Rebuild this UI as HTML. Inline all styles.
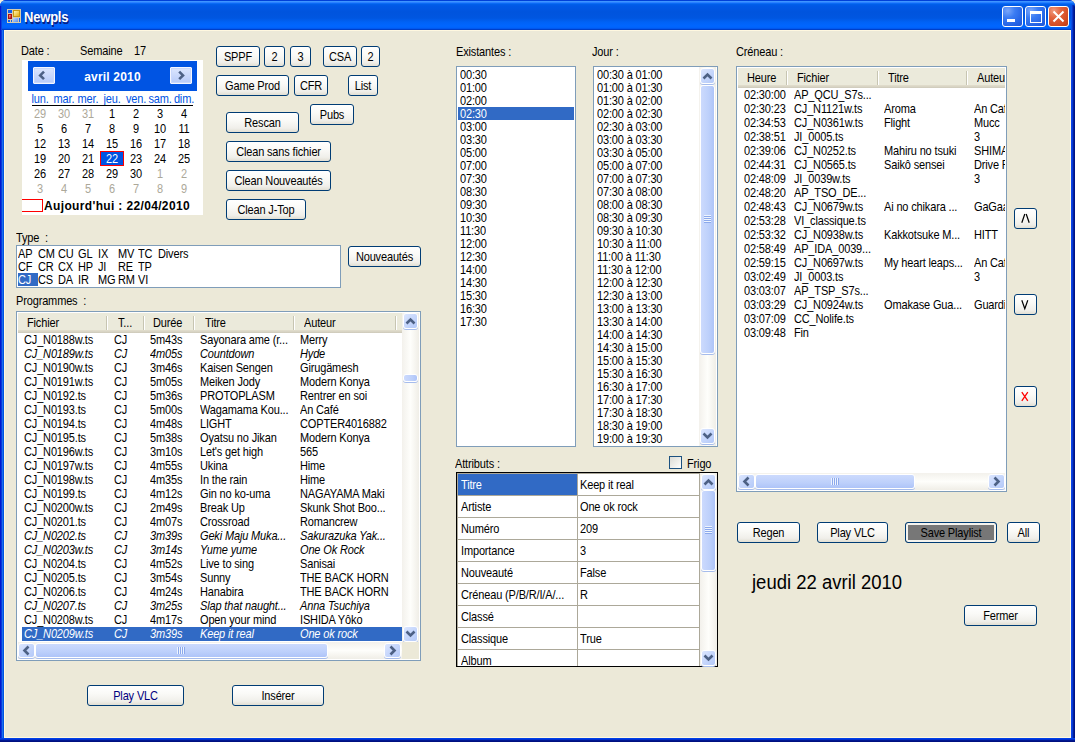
<!DOCTYPE html><html><head><meta charset="utf-8"><title>Newpls</title><style>
*{box-sizing:border-box;margin:0;padding:0}
html,body{width:1075px;height:742px;overflow:hidden;background:#F4F0DC}
body{position:relative;font-family:"Liberation Sans",sans-serif;font-size:11px;color:#000;letter-spacing:-0.15px}
.a{position:absolute}
.t{position:absolute;white-space:pre;line-height:13px;height:13px;margin-left:-1px;transform:scaleY(1.125);transform-origin:0 2px}
.tc{margin-left:0;text-align:center}
.frame{position:absolute;left:0;top:0;width:1075px;height:742px;border-radius:6px 6px 0 0;
 background:#0A3FD8}
.title{position:absolute;left:0;top:0;width:1075px;height:30px;border-radius:6px 6px 0 0;
 background:linear-gradient(to bottom,#0040D8 0px,#0040D8 1px,#3D95FF 1px,#3D95FF 2px,#2A80FF 2px,#2A80FF 3px,#0A6AF5 3px,#0A6AF5 4px,#0060EA 4px,#0058E6 6px,#0054DD 12px,#0056E0 18px,#0062F5 22px,#0066FF 26px,#0062F8 28px,#0058F0 28px,#0058F0 29px,#0040C8 29px,#0040C8 30px)}
.content{position:absolute;left:4px;top:30px;width:1067px;height:708px;background:#ECE9D8;border:1px solid #FFF8E0}
.lb{position:absolute;left:0;top:30px;width:4px;height:712px;background:linear-gradient(to right,#0019CF 0,#0019CF 1px,#0A3AD8 1px,#0A3AD8 2px,#1A6DF0 2px,#1A6DF0 3px,#0055E0 3px,#0055E0 4px)}
.rb{position:absolute;left:1071px;top:30px;width:4px;height:712px;background:linear-gradient(to right,#0A45E8 0,#0A45E8 1px,#0838D0 1px,#0838D0 2px,#00209F 2px,#00209F 3px,#001485 3px)}
.bb{position:absolute;left:0;top:738px;width:1075px;height:4px;background:linear-gradient(to bottom,#0040E8 0,#0040E8 1px,#0030D0 1px,#0030D0 2px,#001890 2px,#001890 3px,#001080 3px)}
.btn{position:absolute;border:1px solid #003C74;border-radius:3px;
 background:linear-gradient(to bottom,#FFFFFF 0%,#FAFAF7 40%,#F0EFEA 80%,#E2DFD3 100%);
 text-align:center;white-space:pre;line-height:19px;color:#000}
.btn span{display:inline-block;transform:scaleY(1.125);transform-origin:50% 5px}
.box{position:absolute;border:1px solid #7F9DB9;background:#fff}
.sel{background:#316AC5;color:#fff}
.sb{position:absolute;background:linear-gradient(to right,#F3F1EC,#FEFEFB 60%,#F3F1EC)}
.sarrow{position:absolute;border:1px solid #B5C9F5;border-radius:2px;background:linear-gradient(135deg,#DCE6FD,#B9CDF8)}
</style></head><body><div class="frame"></div><div class="title"></div><div class="lb"></div><div class="rb"></div><div class="bb"></div><div class="a" style="left:0;top:6px;width:2px;height:24px;background:linear-gradient(to right,#0019CF 0,#0019CF 1px,#0A44DC 1px)"></div><div class="a" style="left:1071px;top:5px;width:4px;height:25px;border-radius:0 2px 0 0;background:linear-gradient(to right,#0A50E8 0,#0A50E8 1px,#0838C8 1px,#0838C8 2px,#0020A0 2px,#0020A0 3px,#00158A 3px)"></div><div class="content"></div><div class="a" style="left:1002px;top:6px;width:21px;height:21px;border:1px solid #fff;border-radius:3px;background:radial-gradient(circle at 25% 20%,#7BA7FA 0%,#3B7CF3 35%,#2462E4 75%,#1F55D6 100%);overflow:hidden"><div class="a" style="left:4px;top:12px;width:8px;height:3px;background:#fff"></div></div><div class="a" style="left:1025px;top:6px;width:21px;height:21px;border:1px solid #fff;border-radius:3px;background:radial-gradient(circle at 25% 20%,#7BA7FA 0%,#3B7CF3 35%,#2462E4 75%,#1F55D6 100%);overflow:hidden"><div class="a" style="left:4px;top:4px;width:12px;height:12px;border:1px solid #fff;border-top-width:3px"></div></div><div class="a" style="left:1048px;top:6px;width:21px;height:21px;border:1px solid #fff;border-radius:3px;background:radial-gradient(circle at 25% 20%,#F09A7E 0%,#E2623C 35%,#D24A22 75%,#BD3A14 100%);overflow:hidden"><svg class="a" style="left:0;top:0" width="19" height="19"><path d="M4.5 4.5 L14.5 14.5 M14.5 4.5 L4.5 14.5" stroke="#fff" stroke-width="2" fill="none"/></svg></div><svg class="a" style="left:7px;top:9px" width="14" height="14"><defs><linearGradient id="gy" x1="0" y1="0" x2="1" y2="1"><stop offset="0" stop-color="#FFF6B0"/><stop offset="1" stop-color="#E8B010"/></linearGradient><linearGradient id="gr" x1="0" y1="0" x2="1" y2="1"><stop offset="0" stop-color="#FF9A9A"/><stop offset="1" stop-color="#B81010"/></linearGradient><linearGradient id="gb" x1="0" y1="0" x2="1" y2="1"><stop offset="0" stop-color="#C0D8FF"/><stop offset="1" stop-color="#5A8EE8"/></linearGradient></defs><rect x="0" y="0" width="14" height="14" fill="#D6CCAE"/><rect x="1" y="1" width="4" height="3" fill="#1060F0"/><rect x="1" y="5" width="4" height="5" fill="#A81010"/><rect x="2" y="6" width="2" height="3" fill="url(#gr)"/><rect x="6" y="1" width="7" height="7" fill="#C89810"/><rect x="7" y="2" width="5" height="5" fill="url(#gy)"/><rect x="6" y="9" width="5" height="4" fill="url(#gb)"/><rect x="1" y="11" width="2" height="2" fill="#1060F0"/><rect x="4" y="11" width="1" height="2" fill="#1060F0"/><rect x="12" y="9" width="1" height="4" fill="#1060F0"/></svg><div class="t" style="left:25px;top:8px;font-size:13px;font-weight:bold;color:#fff;height:18px;line-height:18px;text-shadow:1px 1px 0 #0A1E80;letter-spacing:-0.2px">Newpls</div><div class="t" style="left:22px;top:44px;">Date :</div><div class="t" style="left:81px;top:44px;">Semaine</div><div class="t" style="left:135px;top:44px;">17</div><div class="t" style="left:17px;top:231px;">Type  :</div><div class="t" style="left:17px;top:294px;">Programmes  :</div><div class="t" style="left:457px;top:45px;">Existantes :</div><div class="t" style="left:593px;top:45px;">Jour :</div><div class="t" style="left:737px;top:45px;">Créneau :</div><div class="t" style="left:456px;top:457px;">Attributs :</div><div class="t" style="left:688px;top:457px;">Frigo</div><div class="a" style="left:22px;top:60px;width:181px;height:155px;background:#fff;overflow:hidden"><div class="a" style="left:6px;top:1px;width:169px;height:30px;background:#0054E3"></div><div class="a" style="left:11px;top:7px;width:22px;height:17px;border:1px solid #F4F6FF;border-radius:1px;background:linear-gradient(to bottom,#DCE6FE,#B7CBF9);box-shadow:inset 0 0 0 1px #C9D8FC"><svg class="a" style="left:4px;top:2px" width="12" height="12"><path d="M6 1.6 L2.2 5.4 L6 9.2" stroke="#4D6185" stroke-width="2.6" fill="none"/></svg></div><div class="a" style="left:148px;top:7px;width:22px;height:17px;border:1px solid #F4F6FF;border-radius:1px;background:linear-gradient(to bottom,#DCE6FE,#B7CBF9);box-shadow:inset 0 0 0 1px #C9D8FC"><svg class="a" style="left:4px;top:2px" width="12" height="12"><path d="M4.2 1.6 L8 5.4 L4.2 9.2" stroke="#4D6185" stroke-width="2.6" fill="none"/></svg></div><div class="t tc" style="left:6px;top:10px;width:169px;font-weight:bold;color:#fff;font-size:12px;letter-spacing:0.2px">avril 2010</div><div class="t tc" style="left:4px;top:32px;width:28px;color:#0054E3">lun.</div><div class="t tc" style="left:28px;top:32px;width:28px;color:#0054E3">mar.</div><div class="t tc" style="left:52px;top:32px;width:28px;color:#0054E3">mer.</div><div class="t tc" style="left:76px;top:32px;width:28px;color:#0054E3">jeu.</div><div class="t tc" style="left:100px;top:32px;width:28px;color:#0054E3">ven.</div><div class="t tc" style="left:124px;top:32px;width:28px;color:#0054E3">sam.</div><div class="t tc" style="left:148px;top:32px;width:28px;color:#0054E3">dim.</div><div class="a" style="left:10px;top:45px;width:161px;height:1px;background:#000"></div><div class="t tc" style="left:6px;top:47px;width:24px;color:#ACA899">29</div><div class="t tc" style="left:30px;top:47px;width:24px;color:#ACA899">30</div><div class="t tc" style="left:54px;top:47px;width:24px;color:#ACA899">31</div><div class="t tc" style="left:78px;top:47px;width:24px;color:#000">1</div><div class="t tc" style="left:102px;top:47px;width:24px;color:#000">2</div><div class="t tc" style="left:126px;top:47px;width:24px;color:#000">3</div><div class="t tc" style="left:150px;top:47px;width:24px;color:#000">4</div><div class="t tc" style="left:6px;top:62px;width:24px;color:#000">5</div><div class="t tc" style="left:30px;top:62px;width:24px;color:#000">6</div><div class="t tc" style="left:54px;top:62px;width:24px;color:#000">7</div><div class="t tc" style="left:78px;top:62px;width:24px;color:#000">8</div><div class="t tc" style="left:102px;top:62px;width:24px;color:#000">9</div><div class="t tc" style="left:126px;top:62px;width:24px;color:#000">10</div><div class="t tc" style="left:150px;top:62px;width:24px;color:#000">11</div><div class="t tc" style="left:6px;top:77px;width:24px;color:#000">12</div><div class="t tc" style="left:30px;top:77px;width:24px;color:#000">13</div><div class="t tc" style="left:54px;top:77px;width:24px;color:#000">14</div><div class="t tc" style="left:78px;top:77px;width:24px;color:#000">15</div><div class="t tc" style="left:102px;top:77px;width:24px;color:#000">16</div><div class="t tc" style="left:126px;top:77px;width:24px;color:#000">17</div><div class="t tc" style="left:150px;top:77px;width:24px;color:#000">18</div><div class="t tc" style="left:6px;top:92px;width:24px;color:#000">19</div><div class="t tc" style="left:30px;top:92px;width:24px;color:#000">20</div><div class="t tc" style="left:54px;top:92px;width:24px;color:#000">21</div><div class="a" style="left:78px;top:91px;width:24px;height:15px;background:#0054E3;border:1px solid #FF0000"></div><div class="t tc" style="left:78px;top:92px;width:24px;color:#fff">22</div><div class="t tc" style="left:102px;top:92px;width:24px;color:#000">23</div><div class="t tc" style="left:126px;top:92px;width:24px;color:#000">24</div><div class="t tc" style="left:150px;top:92px;width:24px;color:#000">25</div><div class="t tc" style="left:6px;top:107px;width:24px;color:#000">26</div><div class="t tc" style="left:30px;top:107px;width:24px;color:#000">27</div><div class="t tc" style="left:54px;top:107px;width:24px;color:#000">28</div><div class="t tc" style="left:78px;top:107px;width:24px;color:#000">29</div><div class="t tc" style="left:102px;top:107px;width:24px;color:#000">30</div><div class="t tc" style="left:126px;top:107px;width:24px;color:#ACA899">1</div><div class="t tc" style="left:150px;top:107px;width:24px;color:#ACA899">2</div><div class="t tc" style="left:6px;top:122px;width:24px;color:#ACA899">3</div><div class="t tc" style="left:30px;top:122px;width:24px;color:#ACA899">4</div><div class="t tc" style="left:54px;top:122px;width:24px;color:#ACA899">5</div><div class="t tc" style="left:78px;top:122px;width:24px;color:#ACA899">6</div><div class="t tc" style="left:102px;top:122px;width:24px;color:#ACA899">7</div><div class="t tc" style="left:126px;top:122px;width:24px;color:#ACA899">8</div><div class="t tc" style="left:150px;top:122px;width:24px;color:#ACA899">9</div><div class="a" style="left:-10px;top:139px;width:31px;height:13px;border:1px solid #FF0000"></div><div class="t" style="left:23px;top:139px;font-weight:bold;font-size:12px;letter-spacing:0.35px">Aujourd&#39;hui : 22/04/2010</div></div><div class="box" style="left:16px;top:245px;width:325px;height:43px"></div><div class="a sel" style="left:18px;top:273px;width:20px;height:13px"></div><div class="t" style="left:19px;top:247px;color:#000">AP</div><div class="t" style="left:19px;top:260px;color:#000">CF</div><div class="t" style="left:19px;top:273px;color:#fff">CJ</div><div class="t" style="left:39px;top:247px;color:#000">CM</div><div class="t" style="left:39px;top:260px;color:#000">CR</div><div class="t" style="left:39px;top:273px;color:#000">CS</div><div class="t" style="left:59px;top:247px;color:#000">CU</div><div class="t" style="left:59px;top:260px;color:#000">CX</div><div class="t" style="left:59px;top:273px;color:#000">DA</div><div class="t" style="left:79px;top:247px;color:#000">GL</div><div class="t" style="left:79px;top:260px;color:#000">HP</div><div class="t" style="left:79px;top:273px;color:#000">IR</div><div class="t" style="left:99px;top:247px;color:#000">IX</div><div class="t" style="left:99px;top:260px;color:#000">JI</div><div class="t" style="left:99px;top:273px;color:#000">MG</div><div class="t" style="left:119px;top:247px;color:#000">MV</div><div class="t" style="left:119px;top:260px;color:#000">RE</div><div class="t" style="left:119px;top:273px;color:#000">RM</div><div class="t" style="left:139px;top:247px;color:#000">TC</div><div class="t" style="left:139px;top:260px;color:#000">TP</div><div class="t" style="left:139px;top:273px;color:#000">VI</div><div class="t" style="left:159px;top:247px;color:#000">Divers</div><div class="box" style="left:16px;top:311px;width:405px;height:350px;box-shadow:inset 0 0 0 1px #fff"></div><div class="a" style="left:18px;top:313px;width:384px;height:20px;background:linear-gradient(to bottom,#EBEADB 0,#EBEADB 17px,#E2DECD 17px,#D6D2C2 19px,#CBC7B8 20px)"></div><div class="a" style="left:106px;top:316px;width:1px;height:14px;background:#C7C5B2"></div><div class="a" style="left:107px;top:316px;width:1px;height:14px;background:#fff"></div><div class="a" style="left:143px;top:316px;width:1px;height:14px;background:#C7C5B2"></div><div class="a" style="left:144px;top:316px;width:1px;height:14px;background:#fff"></div><div class="a" style="left:193px;top:316px;width:1px;height:14px;background:#C7C5B2"></div><div class="a" style="left:194px;top:316px;width:1px;height:14px;background:#fff"></div><div class="a" style="left:293px;top:316px;width:1px;height:14px;background:#C7C5B2"></div><div class="a" style="left:294px;top:316px;width:1px;height:14px;background:#fff"></div><div class="a" style="left:395px;top:316px;width:1px;height:14px;background:#C7C5B2"></div><div class="a" style="left:396px;top:316px;width:1px;height:14px;background:#fff"></div><div class="t" style="left:28px;top:316px">Fichier</div><div class="t" style="left:119px;top:316px">T...</div><div class="t" style="left:154px;top:316px">Durée</div><div class="t" style="left:206px;top:316px">Titre</div><div class="t" style="left:305px;top:316px">Auteur</div><div class="a" style="left:18px;top:333px;width:384px;height:309px;overflow:hidden"><div class="t" style="left:7px;top:0px;">CJ_N0188w.ts</div><div class="t" style="left:97px;top:0px;">CJ</div><div class="t" style="left:133px;top:0px;">5m43s</div><div class="t" style="left:183px;top:0px;">Sayonara ame (r...</div><div class="t" style="left:283px;top:0px;">Merry</div><div class="t" style="left:7px;top:14px;font-style:italic;">CJ_N0189w.ts</div><div class="t" style="left:97px;top:14px;font-style:italic;">CJ</div><div class="t" style="left:133px;top:14px;font-style:italic;">4m05s</div><div class="t" style="left:183px;top:14px;font-style:italic;">Countdown</div><div class="t" style="left:283px;top:14px;font-style:italic;">Hyde</div><div class="t" style="left:7px;top:28px;">CJ_N0190w.ts</div><div class="t" style="left:97px;top:28px;">CJ</div><div class="t" style="left:133px;top:28px;">3m46s</div><div class="t" style="left:183px;top:28px;">Kaisen Sengen</div><div class="t" style="left:283px;top:28px;">Girugämesh</div><div class="t" style="left:7px;top:42px;">CJ_N0191w.ts</div><div class="t" style="left:97px;top:42px;">CJ</div><div class="t" style="left:133px;top:42px;">5m05s</div><div class="t" style="left:183px;top:42px;">Meiken Jody</div><div class="t" style="left:283px;top:42px;">Modern Konya</div><div class="t" style="left:7px;top:56px;">CJ_N0192.ts</div><div class="t" style="left:97px;top:56px;">CJ</div><div class="t" style="left:133px;top:56px;">5m36s</div><div class="t" style="left:183px;top:56px;">PROTOPLASM</div><div class="t" style="left:283px;top:56px;">Rentrer en soi</div><div class="t" style="left:7px;top:70px;">CJ_N0193.ts</div><div class="t" style="left:97px;top:70px;">CJ</div><div class="t" style="left:133px;top:70px;">5m00s</div><div class="t" style="left:183px;top:70px;">Wagamama Kou...</div><div class="t" style="left:283px;top:70px;">An Café</div><div class="t" style="left:7px;top:84px;">CJ_N0194.ts</div><div class="t" style="left:97px;top:84px;">CJ</div><div class="t" style="left:133px;top:84px;">4m48s</div><div class="t" style="left:183px;top:84px;">LIGHT</div><div class="t" style="left:283px;top:84px;">COPTER4016882</div><div class="t" style="left:7px;top:98px;">CJ_N0195.ts</div><div class="t" style="left:97px;top:98px;">CJ</div><div class="t" style="left:133px;top:98px;">5m38s</div><div class="t" style="left:183px;top:98px;">Oyatsu no Jikan</div><div class="t" style="left:283px;top:98px;">Modern Konya</div><div class="t" style="left:7px;top:112px;">CJ_N0196w.ts</div><div class="t" style="left:97px;top:112px;">CJ</div><div class="t" style="left:133px;top:112px;">3m10s</div><div class="t" style="left:183px;top:112px;">Let&#x27;s get high</div><div class="t" style="left:283px;top:112px;">565</div><div class="t" style="left:7px;top:126px;">CJ_N0197w.ts</div><div class="t" style="left:97px;top:126px;">CJ</div><div class="t" style="left:133px;top:126px;">4m55s</div><div class="t" style="left:183px;top:126px;">Ukina</div><div class="t" style="left:283px;top:126px;">Hime</div><div class="t" style="left:7px;top:140px;">CJ_N0198w.ts</div><div class="t" style="left:97px;top:140px;">CJ</div><div class="t" style="left:133px;top:140px;">4m35s</div><div class="t" style="left:183px;top:140px;">In the rain</div><div class="t" style="left:283px;top:140px;">Hime</div><div class="t" style="left:7px;top:154px;">CJ_N0199.ts</div><div class="t" style="left:97px;top:154px;">CJ</div><div class="t" style="left:133px;top:154px;">4m12s</div><div class="t" style="left:183px;top:154px;">Gin no ko-uma</div><div class="t" style="left:283px;top:154px;">NAGAYAMA Maki</div><div class="t" style="left:7px;top:168px;">CJ_N0200w.ts</div><div class="t" style="left:97px;top:168px;">CJ</div><div class="t" style="left:133px;top:168px;">2m49s</div><div class="t" style="left:183px;top:168px;">Break Up</div><div class="t" style="left:283px;top:168px;">Skunk Shot Boo...</div><div class="t" style="left:7px;top:182px;">CJ_N0201.ts</div><div class="t" style="left:97px;top:182px;">CJ</div><div class="t" style="left:133px;top:182px;">4m07s</div><div class="t" style="left:183px;top:182px;">Crossroad</div><div class="t" style="left:283px;top:182px;">Romancrew</div><div class="t" style="left:7px;top:196px;font-style:italic;">CJ_N0202.ts</div><div class="t" style="left:97px;top:196px;font-style:italic;">CJ</div><div class="t" style="left:133px;top:196px;font-style:italic;">3m39s</div><div class="t" style="left:183px;top:196px;font-style:italic;">Geki Maju Muka...</div><div class="t" style="left:283px;top:196px;font-style:italic;">Sakurazuka Yak...</div><div class="t" style="left:7px;top:210px;font-style:italic;">CJ_N0203w.ts</div><div class="t" style="left:97px;top:210px;font-style:italic;">CJ</div><div class="t" style="left:133px;top:210px;font-style:italic;">3m14s</div><div class="t" style="left:183px;top:210px;font-style:italic;">Yume yume</div><div class="t" style="left:283px;top:210px;font-style:italic;">One Ok Rock</div><div class="t" style="left:7px;top:224px;">CJ_N0204.ts</div><div class="t" style="left:97px;top:224px;">CJ</div><div class="t" style="left:133px;top:224px;">4m52s</div><div class="t" style="left:183px;top:224px;">Live to sing</div><div class="t" style="left:283px;top:224px;">Sanisai</div><div class="t" style="left:7px;top:238px;">CJ_N0205.ts</div><div class="t" style="left:97px;top:238px;">CJ</div><div class="t" style="left:133px;top:238px;">3m54s</div><div class="t" style="left:183px;top:238px;">Sunny</div><div class="t" style="left:283px;top:238px;">THE BACK HORN</div><div class="t" style="left:7px;top:252px;">CJ_N0206.ts</div><div class="t" style="left:97px;top:252px;">CJ</div><div class="t" style="left:133px;top:252px;">4m24s</div><div class="t" style="left:183px;top:252px;">Hanabira</div><div class="t" style="left:283px;top:252px;">THE BACK HORN</div><div class="t" style="left:7px;top:266px;font-style:italic;">CJ_N0207.ts</div><div class="t" style="left:97px;top:266px;font-style:italic;">CJ</div><div class="t" style="left:133px;top:266px;font-style:italic;">3m25s</div><div class="t" style="left:183px;top:266px;font-style:italic;">Slap that naught...</div><div class="t" style="left:283px;top:266px;font-style:italic;">Anna Tsuchiya</div><div class="t" style="left:7px;top:280px;">CJ_N0208w.ts</div><div class="t" style="left:97px;top:280px;">CJ</div><div class="t" style="left:133px;top:280px;">4m17s</div><div class="t" style="left:183px;top:280px;">Open your mind</div><div class="t" style="left:283px;top:280px;">ISHIDA Yôko</div><div class="a sel" style="left:4px;top:294px;width:380px;height:14px"></div><div class="t" style="left:7px;top:294px;font-style:italic;color:#fff;">CJ_N0209w.ts</div><div class="t" style="left:97px;top:294px;font-style:italic;color:#fff;">CJ</div><div class="t" style="left:133px;top:294px;font-style:italic;color:#fff;">3m39s</div><div class="t" style="left:183px;top:294px;font-style:italic;color:#fff;">Keep it real</div><div class="t" style="left:283px;top:294px;font-style:italic;color:#fff;">One ok rock</div></div><div class="a" style="left:402px;top:313px;width:17px;height:329px;background:linear-gradient(to right,#F3F1EC,#FEFEFB 50%,#F0EEE7)"></div><div class="a" style="left:403px;top:313px;width:15px;height:16px;border-radius:3px;border:1px solid #fff;background:linear-gradient(135deg,#DCE6FE 0%,#C8D8FC 45%,#B4C9F8 100%);box-shadow:0 1px 0 #A6BCEC"></div><svg class="a" style="left:402px;top:312px" width="17" height="17"><path d="M4.5 11.5 L8.5 7.5 L12.5 11.5" stroke="#4D6185" stroke-width="2.6" fill="none" stroke-linecap="butt"/></svg><div class="a" style="left:403px;top:374px;width:15px;height:8px;border-radius:3px;border:1px solid #fff;background:linear-gradient(to right,#CCDAFD,#BDD0FB 60%,#AEC4F8);box-shadow:0 1px 0 #A6BCEC"></div><div class="a" style="left:403px;top:626px;width:15px;height:16px;border-radius:3px;border:1px solid #fff;background:linear-gradient(135deg,#DCE6FE 0%,#C8D8FC 45%,#B4C9F8 100%);box-shadow:0 1px 0 #A6BCEC"></div><svg class="a" style="left:402px;top:625px" width="17" height="17"><path d="M4.5 6.5 L8.5 10.5 L12.5 6.5" stroke="#4D6185" stroke-width="2.6" fill="none" stroke-linecap="butt"/></svg><div class="a" style="left:18px;top:642px;width:384px;height:17px;background:linear-gradient(to bottom,#F3F1EC,#FEFEFB 50%,#F0EEE7)"></div><div class="a" style="left:18px;top:643px;width:17px;height:15px;border-radius:3px;border:1px solid #fff;background:linear-gradient(135deg,#DCE6FE 0%,#C8D8FC 45%,#B4C9F8 100%);box-shadow:0 1px 0 #A6BCEC"></div><svg class="a" style="left:18px;top:642px" width="17" height="17"><path d="M10.5 4.5 L6.5 8.5 L10.5 12.5" stroke="#4D6185" stroke-width="2.6" fill="none" stroke-linecap="butt"/></svg><div class="a" style="left:35px;top:643px;width:293px;height:15px;border-radius:3px;border:1px solid #fff;background:linear-gradient(to bottom,#CCDAFD,#BDD0FB 60%,#AEC4F8);box-shadow:0 1px 0 #A6BCEC"></div><div class="a" style="left:177px;top:647px;width:8px;height:7px;background:repeating-linear-gradient(to right,#EEF4FE 0,#EEF4FE 1px,#8CA9EC 1px,#8CA9EC 2px)"></div><div class="a" style="left:384px;top:643px;width:17px;height:15px;border-radius:3px;border:1px solid #fff;background:linear-gradient(135deg,#DCE6FE 0%,#C8D8FC 45%,#B4C9F8 100%);box-shadow:0 1px 0 #A6BCEC"></div><svg class="a" style="left:384px;top:642px" width="17" height="17"><path d="M6.5 4.5 L10.5 8.5 L6.5 12.5" stroke="#4D6185" stroke-width="2.6" fill="none" stroke-linecap="butt"/></svg><div class="a" style="left:402px;top:642px;width:17px;height:17px;background:#ECE9D8"></div><div class="box" style="left:456px;top:66px;width:120px;height:381px"></div><div class="a sel" style="left:458px;top:107px;width:116px;height:13px"></div><div class="t" style="left:461px;top:68px;color:#000">00:30</div><div class="t" style="left:461px;top:81px;color:#000">01:00</div><div class="t" style="left:461px;top:94px;color:#000">02:00</div><div class="t" style="left:461px;top:107px;color:#fff">02:30</div><div class="t" style="left:461px;top:120px;color:#000">03:00</div><div class="t" style="left:461px;top:133px;color:#000">03:30</div><div class="t" style="left:461px;top:146px;color:#000">05:00</div><div class="t" style="left:461px;top:159px;color:#000">07:00</div><div class="t" style="left:461px;top:172px;color:#000">07:30</div><div class="t" style="left:461px;top:185px;color:#000">08:30</div><div class="t" style="left:461px;top:198px;color:#000">09:30</div><div class="t" style="left:461px;top:211px;color:#000">10:30</div><div class="t" style="left:461px;top:224px;color:#000">11:30</div><div class="t" style="left:461px;top:237px;color:#000">12:00</div><div class="t" style="left:461px;top:250px;color:#000">12:30</div><div class="t" style="left:461px;top:263px;color:#000">14:00</div><div class="t" style="left:461px;top:276px;color:#000">14:30</div><div class="t" style="left:461px;top:289px;color:#000">15:30</div><div class="t" style="left:461px;top:302px;color:#000">16:30</div><div class="t" style="left:461px;top:315px;color:#000">17:30</div><div class="box" style="left:593px;top:66px;width:125px;height:381px"></div><div class="t" style="left:598px;top:68px">00:30 à 01:00</div><div class="t" style="left:598px;top:81px">01:00 à 01:30</div><div class="t" style="left:598px;top:94px">01:30 à 02:00</div><div class="t" style="left:598px;top:107px">02:00 à 02:30</div><div class="t" style="left:598px;top:120px">02:30 à 03:00</div><div class="t" style="left:598px;top:133px">03:00 à 03:30</div><div class="t" style="left:598px;top:146px">03:30 à 05:00</div><div class="t" style="left:598px;top:159px">05:00 à 07:00</div><div class="t" style="left:598px;top:172px">07:00 à 07:30</div><div class="t" style="left:598px;top:185px">07:30 à 08:00</div><div class="t" style="left:598px;top:198px">08:00 à 08:30</div><div class="t" style="left:598px;top:211px">08:30 à 09:30</div><div class="t" style="left:598px;top:224px">09:30 à 10:30</div><div class="t" style="left:598px;top:237px">10:30 à 11:00</div><div class="t" style="left:598px;top:250px">11:00 à 11:30</div><div class="t" style="left:598px;top:263px">11:30 à 12:00</div><div class="t" style="left:598px;top:276px">12:00 à 12:30</div><div class="t" style="left:598px;top:289px">12:30 à 13:00</div><div class="t" style="left:598px;top:302px">13:00 à 13:30</div><div class="t" style="left:598px;top:315px">13:30 à 14:00</div><div class="t" style="left:598px;top:328px">14:00 à 14:30</div><div class="t" style="left:598px;top:341px">14:30 à 15:00</div><div class="t" style="left:598px;top:354px">15:00 à 15:30</div><div class="t" style="left:598px;top:367px">15:30 à 16:30</div><div class="t" style="left:598px;top:380px">16:30 à 17:00</div><div class="t" style="left:598px;top:393px">17:00 à 17:30</div><div class="t" style="left:598px;top:406px">17:30 à 18:30</div><div class="t" style="left:598px;top:419px">18:30 à 19:00</div><div class="t" style="left:598px;top:432px">19:00 à 19:30</div><div class="a" style="left:699px;top:67px;width:17px;height:379px;background:linear-gradient(to right,#F3F1EC,#FEFEFB 50%,#F0EEE7)"></div><div class="a" style="left:700px;top:68px;width:15px;height:16px;border-radius:3px;border:1px solid #fff;background:linear-gradient(135deg,#DCE6FE 0%,#C8D8FC 45%,#B4C9F8 100%);box-shadow:0 1px 0 #A6BCEC"></div><svg class="a" style="left:699px;top:67px" width="17" height="17"><path d="M4.5 11.5 L8.5 7.5 L12.5 11.5" stroke="#4D6185" stroke-width="2.6" fill="none" stroke-linecap="butt"/></svg><div class="a" style="left:700px;top:85px;width:15px;height:269px;border-radius:3px;border:1px solid #fff;background:linear-gradient(to right,#CCDAFD,#BDD0FB 60%,#AEC4F8);box-shadow:0 1px 0 #A6BCEC"></div><div class="a" style="left:704px;top:215px;width:7px;height:8px;background:repeating-linear-gradient(to bottom,#EEF4FE 0,#EEF4FE 1px,#8CA9EC 1px,#8CA9EC 2px)"></div><div class="a" style="left:700px;top:428px;width:15px;height:16px;border-radius:3px;border:1px solid #fff;background:linear-gradient(135deg,#DCE6FE 0%,#C8D8FC 45%,#B4C9F8 100%);box-shadow:0 1px 0 #A6BCEC"></div><svg class="a" style="left:699px;top:427px" width="17" height="17"><path d="M4.5 6.5 L8.5 10.5 L12.5 6.5" stroke="#4D6185" stroke-width="2.6" fill="none" stroke-linecap="butt"/></svg><div class="a" style="left:669px;top:456px;width:13px;height:13px;border:1px solid #1C5180;background:linear-gradient(135deg,#DCDBD5,#F4F4F0 70%,#FFFFFF)"></div><div class="a" style="left:456px;top:472px;width:262px;height:195px;border:1px solid #000;background:#fff;overflow:hidden"><div class="a" style="left:0;top:0;width:243px;height:1px;background:#ACA899"></div><div class="a" style="left:0;top:0;width:1px;height:193px;background:#ACA899"></div><div class="a" style="left:120px;top:0;width:1px;height:193px;background:#ACA899"></div><div class="a" style="left:242px;top:0;width:1px;height:193px;background:#ACA899"></div><div class="a" style="left:0;top:22px;width:243px;height:1px;background:#ACA899"></div><div class="a" style="left:0;top:44px;width:243px;height:1px;background:#ACA899"></div><div class="a" style="left:0;top:66px;width:243px;height:1px;background:#ACA899"></div><div class="a" style="left:0;top:88px;width:243px;height:1px;background:#ACA899"></div><div class="a" style="left:0;top:110px;width:243px;height:1px;background:#ACA899"></div><div class="a" style="left:0;top:132px;width:243px;height:1px;background:#ACA899"></div><div class="a" style="left:0;top:154px;width:243px;height:1px;background:#ACA899"></div><div class="a" style="left:0;top:176px;width:243px;height:1px;background:#ACA899"></div><div class="a" style="left:0;top:198px;width:243px;height:1px;background:#ACA899"></div><div class="a sel" style="left:1px;top:1px;width:119px;height:21px"></div><div class="t" style="left:5px;top:5px;color:#fff">Titre</div><div class="t" style="left:124px;top:5px">Keep it real</div><div class="t" style="left:5px;top:27px;color:#000">Artiste</div><div class="t" style="left:124px;top:27px">One ok rock</div><div class="t" style="left:5px;top:49px;color:#000">Numéro</div><div class="t" style="left:124px;top:49px">209</div><div class="t" style="left:5px;top:71px;color:#000">Importance</div><div class="t" style="left:124px;top:71px">3</div><div class="t" style="left:5px;top:93px;color:#000">Nouveauté</div><div class="t" style="left:124px;top:93px">False</div><div class="t" style="left:5px;top:115px;color:#000">Créneau (P/B/R/I/A/...</div><div class="t" style="left:124px;top:115px">R</div><div class="t" style="left:5px;top:137px;color:#000">Classé</div><div class="t" style="left:124px;top:137px"></div><div class="t" style="left:5px;top:159px;color:#000">Classique</div><div class="t" style="left:124px;top:159px">True</div><div class="t" style="left:5px;top:181px;color:#000">Album</div><div class="t" style="left:124px;top:181px"></div></div><div class="a" style="left:700px;top:473px;width:17px;height:193px;background:linear-gradient(to right,#F3F1EC,#FEFEFB 50%,#F0EEE7)"></div><div class="a" style="left:701px;top:474px;width:15px;height:16px;border-radius:3px;border:1px solid #fff;background:linear-gradient(135deg,#DCE6FE 0%,#C8D8FC 45%,#B4C9F8 100%);box-shadow:0 1px 0 #A6BCEC"></div><svg class="a" style="left:700px;top:473px" width="17" height="17"><path d="M4.5 11.5 L8.5 7.5 L12.5 11.5" stroke="#4D6185" stroke-width="2.6" fill="none" stroke-linecap="butt"/></svg><div class="a" style="left:701px;top:490px;width:15px;height:81px;border-radius:3px;border:1px solid #fff;background:linear-gradient(to right,#CCDAFD,#BDD0FB 60%,#AEC4F8);box-shadow:0 1px 0 #A6BCEC"></div><div class="a" style="left:705px;top:526px;width:7px;height:8px;background:repeating-linear-gradient(to bottom,#EEF4FE 0,#EEF4FE 1px,#8CA9EC 1px,#8CA9EC 2px)"></div><div class="a" style="left:701px;top:650px;width:15px;height:16px;border-radius:3px;border:1px solid #fff;background:linear-gradient(135deg,#DCE6FE 0%,#C8D8FC 45%,#B4C9F8 100%);box-shadow:0 1px 0 #A6BCEC"></div><svg class="a" style="left:700px;top:649px" width="17" height="17"><path d="M4.5 6.5 L8.5 10.5 L12.5 6.5" stroke="#4D6185" stroke-width="2.6" fill="none" stroke-linecap="butt"/></svg><div class="box" style="left:736px;top:66px;width:271px;height:426px;box-shadow:inset 0 0 0 1px #fff"></div><div class="a" style="left:738px;top:68px;width:267px;height:20px;background:linear-gradient(to bottom,#EBEADB 0,#EBEADB 17px,#E2DECD 17px,#D6D2C2 19px,#CBC7B8 20px)"></div><div class="a" style="left:786px;top:71px;width:1px;height:14px;background:#C7C5B2"></div><div class="a" style="left:787px;top:71px;width:1px;height:14px;background:#fff"></div><div class="a" style="left:877px;top:71px;width:1px;height:14px;background:#C7C5B2"></div><div class="a" style="left:878px;top:71px;width:1px;height:14px;background:#fff"></div><div class="a" style="left:966px;top:71px;width:1px;height:14px;background:#C7C5B2"></div><div class="a" style="left:967px;top:71px;width:1px;height:14px;background:#fff"></div><div class="a" style="left:738px;top:68px;width:267px;height:20px;overflow:hidden"><div class="t" style="left:10px;top:3px">Heure</div><div class="t" style="left:60px;top:3px">Fichier</div><div class="t" style="left:151px;top:3px">Titre</div><div class="t" style="left:240px;top:3px">Auteur</div></div><div class="a" style="left:738px;top:88px;width:267px;height:385px;overflow:hidden"><div class="t" style="left:7px;top:0px">02:30:00</div><div class="t" style="left:57px;top:0px">AP_QCU_S7s...</div><div class="t" style="left:7px;top:14px">02:30:23</div><div class="t" style="left:57px;top:14px">CJ_N1121w.ts</div><div class="t" style="left:147px;top:14px">Aroma</div><div class="t" style="left:237px;top:14px">An Café</div><div class="t" style="left:7px;top:28px">02:34:53</div><div class="t" style="left:57px;top:28px">CJ_N0361w.ts</div><div class="t" style="left:147px;top:28px">Flight</div><div class="t" style="left:237px;top:28px">Mucc</div><div class="t" style="left:7px;top:42px">02:38:51</div><div class="t" style="left:57px;top:42px">JI_0005.ts</div><div class="t" style="left:237px;top:42px">3</div><div class="t" style="left:7px;top:56px">02:39:06</div><div class="t" style="left:57px;top:56px">CJ_N0252.ts</div><div class="t" style="left:147px;top:56px">Mahiru no tsuki</div><div class="t" style="left:237px;top:56px">SHIMA</div><div class="t" style="left:7px;top:70px">02:44:31</div><div class="t" style="left:57px;top:70px">CJ_N0565.ts</div><div class="t" style="left:147px;top:70px">Saikô sensei</div><div class="t" style="left:237px;top:70px">Drive F</div><div class="t" style="left:7px;top:84px">02:48:09</div><div class="t" style="left:57px;top:84px">JI_0039w.ts</div><div class="t" style="left:237px;top:84px">3</div><div class="t" style="left:7px;top:98px">02:48:20</div><div class="t" style="left:57px;top:98px">AP_TSO_DE...</div><div class="t" style="left:7px;top:112px">02:48:43</div><div class="t" style="left:57px;top:112px">CJ_N0679w.ts</div><div class="t" style="left:147px;top:112px">Ai no chikara ...</div><div class="t" style="left:237px;top:112px">GaGaa</div><div class="t" style="left:7px;top:126px">02:53:28</div><div class="t" style="left:57px;top:126px">VI_classique.ts</div><div class="t" style="left:7px;top:140px">02:53:32</div><div class="t" style="left:57px;top:140px">CJ_N0938w.ts</div><div class="t" style="left:147px;top:140px">Kakkotsuke M...</div><div class="t" style="left:237px;top:140px">HITT</div><div class="t" style="left:7px;top:154px">02:58:49</div><div class="t" style="left:57px;top:154px">AP_IDA_0039...</div><div class="t" style="left:7px;top:168px">02:59:15</div><div class="t" style="left:57px;top:168px">CJ_N0697w.ts</div><div class="t" style="left:147px;top:168px">My heart leaps...</div><div class="t" style="left:237px;top:168px">An Café</div><div class="t" style="left:7px;top:182px">03:02:49</div><div class="t" style="left:57px;top:182px">JI_0003.ts</div><div class="t" style="left:237px;top:182px">3</div><div class="t" style="left:7px;top:196px">03:03:07</div><div class="t" style="left:57px;top:196px">AP_TSP_S7s...</div><div class="t" style="left:7px;top:210px">03:03:29</div><div class="t" style="left:57px;top:210px">CJ_N0924w.ts</div><div class="t" style="left:147px;top:210px">Omakase Gua...</div><div class="t" style="left:237px;top:210px">Guardian</div><div class="t" style="left:7px;top:224px">03:07:09</div><div class="t" style="left:57px;top:224px">CC_Nolife.ts</div><div class="t" style="left:7px;top:238px">03:09:48</div><div class="t" style="left:57px;top:238px">Fin</div></div><div class="a" style="left:738px;top:473px;width:267px;height:17px;background:linear-gradient(to bottom,#F3F1EC,#FEFEFB 50%,#F0EEE7)"></div><div class="a" style="left:738px;top:474px;width:17px;height:15px;border-radius:3px;border:1px solid #fff;background:linear-gradient(135deg,#DCE6FE 0%,#C8D8FC 45%,#B4C9F8 100%);box-shadow:0 1px 0 #A6BCEC"></div><svg class="a" style="left:738px;top:473px" width="17" height="17"><path d="M10.5 4.5 L6.5 8.5 L10.5 12.5" stroke="#4D6185" stroke-width="2.6" fill="none" stroke-linecap="butt"/></svg><div class="a" style="left:755px;top:474px;width:160px;height:15px;border-radius:3px;border:1px solid #fff;background:linear-gradient(to bottom,#CCDAFD,#BDD0FB 60%,#AEC4F8);box-shadow:0 1px 0 #A6BCEC"></div><div class="a" style="left:831px;top:478px;width:8px;height:7px;background:repeating-linear-gradient(to right,#EEF4FE 0,#EEF4FE 1px,#8CA9EC 1px,#8CA9EC 2px)"></div><div class="a" style="left:988px;top:474px;width:17px;height:15px;border-radius:3px;border:1px solid #fff;background:linear-gradient(135deg,#DCE6FE 0%,#C8D8FC 45%,#B4C9F8 100%);box-shadow:0 1px 0 #A6BCEC"></div><svg class="a" style="left:988px;top:473px" width="17" height="17"><path d="M6.5 4.5 L10.5 8.5 L6.5 12.5" stroke="#4D6185" stroke-width="2.6" fill="none" stroke-linecap="butt"/></svg><div class="t" style="left:753px;top:570px;font-size:18.5px;height:22px;line-height:22px;letter-spacing:0">jeudi 22 avril 2010</div><div class="btn" style="left:216px;top:46px;width:44px;height:21px;"><span>SPPF</span></div><div class="btn" style="left:264px;top:46px;width:21px;height:21px;"><span>2</span></div><div class="btn" style="left:290px;top:46px;width:21px;height:21px;"><span>3</span></div><div class="btn" style="left:323px;top:46px;width:34px;height:21px;"><span>CSA</span></div><div class="btn" style="left:361px;top:46px;width:19px;height:21px;"><span>2</span></div><div class="btn" style="left:216px;top:75px;width:73px;height:21px;"><span>Game Prod</span></div><div class="btn" style="left:294px;top:75px;width:34px;height:21px;"><span>CFR</span></div><div class="btn" style="left:348px;top:75px;width:30px;height:21px;"><span>List</span></div><div class="btn" style="left:310px;top:104px;width:44px;height:21px;"><span>Pubs</span></div><div class="btn" style="left:226px;top:112px;width:73px;height:21px;"><span>Rescan</span></div><div class="btn" style="left:226px;top:141px;width:105px;height:21px;"><span>Clean sans fichier</span></div><div class="btn" style="left:226px;top:170px;width:105px;height:21px;"><span>Clean Nouveautés</span></div><div class="btn" style="left:226px;top:199px;width:80px;height:21px;"><span>Clean J-Top</span></div><div class="btn" style="left:348px;top:246px;width:73px;height:21px;"><span>Nouveautés</span></div><div class="btn" style="left:232px;top:685px;width:92px;height:21px;"><span>Insérer</span></div><div class="btn" style="left:737px;top:522px;width:63px;height:21px;"><span>Regen</span></div><div class="btn" style="left:817px;top:522px;width:71px;height:21px;"><span>Play VLC</span></div><div class="btn" style="left:1007px;top:522px;width:33px;height:21px;"><span>All</span></div><div class="btn" style="left:964px;top:605px;width:73px;height:21px;"><span>Fermer</span></div><div class="btn" style="left:1014px;top:208px;width:23px;height:21px;"><span></span></div><div class="btn" style="left:1014px;top:294px;width:23px;height:21px;"><span></span></div><div class="btn" style="left:87px;top:685px;width:97px;height:21px;color:#000080"><span>Play VLC</span></div><div class="btn" style="left:905px;top:522px;width:92px;height:21px;background:#777777;box-shadow:inset 0 0 0 2px #F4F3EE;"><span>Save Playlist</span></div><div class="btn" style="left:1014px;top:386px;width:23px;height:21px;"><span></span></div><svg class="a" style="left:1014px;top:208px" width="23" height="21"><path d="M7.8 14.8 L10.8 6 M12.2 6 L15.2 14.8" stroke="#000" stroke-width="1.2" fill="none"/></svg><svg class="a" style="left:1014px;top:294px" width="23" height="21"><path d="M7.8 6.2 L10.8 14.8 L13.8 6.2" stroke="#000" stroke-width="1.2" fill="none"/></svg><svg class="a" style="left:1014px;top:386px" width="23" height="21"><path d="M7.8 6.2 L13.8 14.8 M13.8 6.2 L7.8 14.8" stroke="#F00" stroke-width="1.3" fill="none"/></svg></body></html>
